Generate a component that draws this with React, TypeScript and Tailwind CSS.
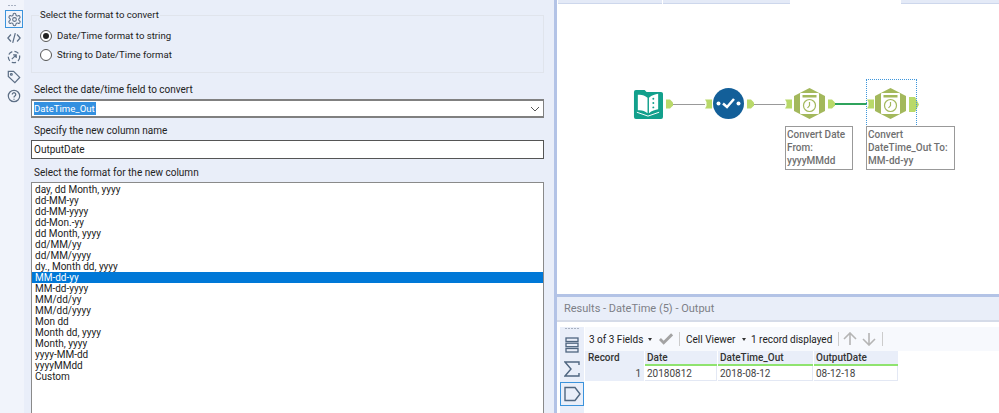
import React from 'react';

const formats = [
  'day, dd Month, yyyy', 'dd-MM-yy', 'dd-MM-yyyy', 'dd-Mon.-yy', 'dd Month, yyyy', 'dd/MM/yy', 'dd/MM/yyyy',
  'dy., Month dd, yyyy', 'MM-dd-yy', 'MM-dd-yyyy', 'MM/dd/yy', 'MM/dd/yyyy', 'Mon dd', 'Month dd, yyyy',
  'Month, yyyy', 'yyyy-MM-dd', 'yyyyMMdd', 'Custom',
];

function Gear() {
  return (
    <svg width="15" height="15" viewBox="0 0 24 24" fill="none" stroke="#5d6f86" strokeWidth="1.7">
      <path d="M12.2 2h-.4a2 2 0 0 0-2 2v.2a2 2 0 0 1-1 1.7l-.4.3a2 2 0 0 1-2 0l-.2-.1a2 2 0 0 0-2.7.7l-.2.4a2 2 0 0 0 .7 2.7l.2.1a2 2 0 0 1 1 1.7v.5a2 2 0 0 1-1 1.8l-.2.1a2 2 0 0 0-.7 2.7l.2.4a2 2 0 0 0 2.7.7l.2-.1a2 2 0 0 1 2 0l.4.3a2 2 0 0 1 1 1.7v.2a2 2 0 0 0 2 2h.4a2 2 0 0 0 2-2v-.2a2 2 0 0 1 1-1.7l.4-.3a2 2 0 0 1 2 0l.2.1a2 2 0 0 0 2.7-.7l.2-.4a2 2 0 0 0-.7-2.7l-.2-.1a2 2 0 0 1-1-1.8v-.5a2 2 0 0 1 1-1.7l.2-.1a2 2 0 0 0 .7-2.7l-.2-.4a2 2 0 0 0-2.7-.7l-.2.1a2 2 0 0 1-2 0l-.4-.3a2 2 0 0 1-1-1.7V4a2 2 0 0 0-2-2z" />
      <circle cx="12" cy="12" r="3" />
    </svg>
  );
}

function RailIcon({ children }: { children: React.ReactNode }) {
  return <div className="h-[19.5px] flex items-center justify-center">{children}</div>;
}

function Sidebar() {
  return (
    <div className="w-[24px] shrink-0 h-full bg-[#f1f4fb] flex flex-col pt-[5px]">
      <div className="flex justify-center gap-[1px] h-[5px]">
        {[0, 1, 2].map((i) => <span key={i} className="w-[2px] h-[1px] bg-[#a9b2c2]" />)}
      </div>
      <div className="ml-[5px] w-[18px] h-[18px] border border-[#3b93dc] flex items-center justify-center"><Gear /></div>
      <div className="pl-[6px] w-[22px]">
        <RailIcon>
          <svg width="14" height="14" viewBox="0 0 16 16" fill="none" stroke="#5d6f86" strokeWidth="1.4">
            <path d="M4.500 4 1 8l3.500 4M11.500 4 15 8l-3.500 4M9.500 2.500l-3 11" />
          </svg>
        </RailIcon>
        <RailIcon>
          <svg width="14" height="14" viewBox="0 0 16 16" fill="none" stroke="#5d6f86" strokeWidth="1.4">
            <circle cx="8" cy="8" r="6.500" strokeDasharray="5 2.600" />
            <path d="M5.500 10.500 10.500 5.500M7 5.500h3.500V9" />
          </svg>
        </RailIcon>
        <RailIcon>
          <svg width="14" height="14" viewBox="0 0 16 16" fill="none" stroke="#5d6f86" strokeWidth="1.4">
            <path d="M1.500 1.500h6l7 7-5.500 6-7.500-7z" />
            <circle cx="5" cy="5" r="1" />
          </svg>
        </RailIcon>
        <RailIcon>
          <svg width="14" height="14" viewBox="0 0 16 16" fill="none" stroke="#5d6f86" strokeWidth="1.4">
            <circle cx="8" cy="8" r="6.500" />
            <path d="M6 6.200a2 2 0 1 1 3 1.800c-.7.400-1 .8-1 1.600M8 11v1.200" />
          </svg>
        </RailIcon>
      </div>
    </div>
  );
}

function Radio({ checked, label }: { checked?: boolean; label: string }) {
  return (
    <div className="flex items-center gap-[5px] h-[19.5px]">
      <span className="w-[12px] h-[12px] rounded-full border border-[#555] bg-white flex items-center justify-center">
        {checked && <span className="w-[6px] h-[6px] rounded-full bg-[#222]" />}
      </span>
      <span>{label}</span>
    </div>
  );
}

function ConfigPanel() {
  return (
    <div className="w-[530px] shrink-0 h-full bg-[#e9eef9] pl-[7px] text-[10px] leading-[14px] text-[#222]">
      <div className="w-[513px] h-[58px] mt-[15px] border border-[#e0e4ec] pl-[8px] relative text-[9.6px]">
        <span className="absolute left-[7px] -top-[8px] bg-[#e9eef9] px-[1px]">Select the format to convert</span>
        <div className="pt-[10px]">
          <Radio checked label="Date/Time format to string" />
          <Radio label="String to Date/Time format" />
        </div>
      </div>
      <div className="pl-[3px] mt-[10px] h-[16px]">Select the date/time field to convert</div>
      <div className="w-[513px] h-[19px] border border-y-2 border-[#808080] bg-white flex items-center justify-between pl-[2px] pr-[3px]">
        <span className="bg-[#3390e0] text-white pr-[1px] leading-[13px] text-[9.6px]">DateTime_Out</span>
        <svg width="10" height="6" viewBox="0 0 10 6" fill="none" stroke="#555" strokeWidth="1"><path d="M1 1l4 4 4-4" /></svg>
      </div>
      <div className="pl-[3px] mt-[6px] h-[16px]">Specify the new column name</div>
      <div className="w-[513px] h-[19px] border border-[#555] bg-white flex items-center pl-[2px]">OutputDate</div>
      <div className="pl-[3px] mt-[7px] h-[16px]">Select the format for the new column</div>
      <div className="w-[513px] h-[240px] border border-[#8a8a8a] bg-white pt-[1px]">
        {formats.map((f) => (
          <div key={f} className={`h-[11px] leading-[11px] pl-[3px] ${f === 'MM-dd-yy' ? 'bg-[#0078d7] text-white' : ''}`}>{f}</div>
        ))}
      </div>
    </div>
  );
}

function Anchor({ left, kind }: { left: number; kind: 'in' | 'out' }) {
  return (
    <svg className="absolute top-[99px]" style={{ left }} width="7" height="10" viewBox="0 0 7 10">
      {kind === 'out'
        ? <path d="M0 0.500h4L7 3.500v3L4 9.500H0z" fill="#b9d96a" />
        : <path d="M0 0.500h7v9H0l1.500-2.500v-4z" fill="#b9d96a" />}
    </svg>
  );
}

function DateNode({ left }: { left: number }) {
  return (
    <svg className="absolute top-[88px]" style={{ left }} width="31" height="31" viewBox="0 0 31 31">
      <path d="M15.500 0 31 8v15l-15.500 8L0 23V8z" fill="#a3b85c" />
      <rect x="6" y="5" width="19" height="21" rx="1" fill="#fff" />
      <rect x="8.500" y="7" width="14" height="2.500" fill="#a3b85c" />
      <circle cx="15.500" cy="17.500" r="6" fill="#fff" stroke="#a3b85c" strokeWidth="1.200" />
      <path d="M15.500 14v3.500l-2 2.500" fill="none" stroke="#a3b85c" strokeWidth="1.200" />
    </svg>
  );
}

function Annotation({ left, width, lines }: { left: number; width: number; lines: string[] }) {
  return (
    <div className="absolute top-[126px] h-[44px] border border-[#999] bg-white pl-[1px] pt-[1px] text-[10px] leading-[13px] font-medium text-[#707070]" style={{ left, width }}>
      {lines.map((l) => <div key={l} className="whitespace-nowrap">{l}</div>)}
    </div>
  );
}

function Canvas() {
  return (
    <div className="relative h-[294px] shrink-0 bg-white overflow-hidden">
      <div className="h-[4px] flex">
        <div className="ml-[1px] w-[104px] bg-[#e4eaf7] border-b border-[#cdd7ec]" />
        <div className="ml-[1px] w-[127px] bg-[#e4eaf7] border-b border-[#cdd7ec]" />
        <div className="flex-1 bg-white" />
        <div className="w-[98px] bg-[#e4eaf7] border-b border-[#cdd7ec]" />
      </div>
      {/* coordinates below are relative to the canvas (page x - 557) */}
      <svg className="absolute left-[76px] top-[89px]" width="30" height="30" viewBox="0 0 31 31">
        <path d="M1 3a2 2 0 0 1 2-2h9l2 2h15a2 2 0 0 1 2 2v24a2 2 0 0 1-2 2H3a2 2 0 0 1-2-2z" fill="#12a08c" />
        <path d="M5 6c4-.5 7 .5 10 3v16c-3-2.500-6-3.500-10-3z" fill="#fff" />
        <path d="M26 5c-3 .5-6.500 1.500-9.500 4v16c3-2.500 6.500-3.500 9.500-4z" fill="#fff" />
        <path d="M4 24l11.500 4 11.500-4" fill="none" stroke="#fff" strokeWidth="1" />
        <circle cx="21" cy="10" r="1" fill="#12a08c" /><circle cx="21" cy="14.500" r="1" fill="#12a08c" /><circle cx="21" cy="19" r="1" fill="#12a08c" />
      </svg>
      <svg className="absolute left-[156px] top-[88px]" width="31" height="31" viewBox="0 0 31 31">
        <circle cx="15.500" cy="15.500" r="15.500" fill="#135f99" />
        <circle cx="5.500" cy="15.500" r="2" fill="#fff" /><circle cx="25.500" cy="15.500" r="2" fill="#fff" />
        <path d="M10 15.500l4 3.500 7-8" fill="none" stroke="#fff" strokeWidth="2.500" />
      </svg>
      <DateNode left={237} />
      <DateNode left={318} />
      <div className="absolute left-[116px] top-[104px] w-[32px] h-[1px] bg-[#999]" />
      <div className="absolute left-[196px] top-[104px] w-[32px] h-[1px] bg-[#999]" />
      <div className="absolute left-[277px] top-[103px] w-[33px] h-[2px] bg-[#2fa35c]" />
      <Anchor left={109} kind="out" />
      <Anchor left={148} kind="in" />
      <Anchor left={190} kind="out" />
      <Anchor left={228} kind="in" />
      <Anchor left={271} kind="out" />
      <Anchor left={310} kind="in" />
      <svg className="absolute left-[352px] top-[97px]" width="10" height="15" viewBox="0 0 10 15">
        <path d="M0 0h6l4 7.500-4 7.500H0z" fill="#b9d96a" />
      </svg>
      <div className="absolute left-[309px] top-[79px] w-[51px] h-[48px] border border-dotted border-[#3d96dc]" />
      <Annotation left={228} width={68} lines={['Convert Date', 'From:', 'yyyyMMdd']} />
      <Annotation left={309} width={89} lines={['Convert', 'DateTime_Out To:', 'MM-dd-yy']} />
    </div>
  );
}

function Caret() {
  return <span className="w-0 h-0 border-x-[2.5px] border-x-transparent border-t-[3px] border-t-[#333]" />;
}

function Sep() {
  return <span className="block w-[1px] h-[14px] bg-[#ccc]" />;
}

function Results() {
  const cols = ['Date', 'DateTime_Out', 'OutputDate'];
  const vals = ['20180812', '2018-08-12', '08-12-18'];
  return (
    <div className="flex-1 flex flex-col bg-white min-h-0">
      <div className="h-[25px] shrink-0 bg-[#e9eef9] border-b-2 border-[#d5dbe8] pl-[7px] pt-[2px] flex items-center text-[11px] text-[#7d8087]">
        Results - DateTime (5) - Output
      </div>
      <div className="flex-1 flex min-h-0">
        <div className="w-[24px] ml-[3px] mt-[5px] bg-[#e9eef9] flex flex-col">
          <div className="flex justify-center gap-[1px] h-[6px] pt-[1px]">
            {[0, 1, 2, 3, 4].map((i) => <span key={i} className="w-[2px] h-[1px] bg-[#a9b2c2]" />)}
          </div>
          <div className="h-[24px] flex items-center justify-center">
            <svg width="14" height="16" viewBox="0 0 14 16" fill="none" stroke="#4f6680" strokeWidth="1.300">
              <rect x="1" y="1" width="12" height="3.500" /><rect x="1" y="6.200" width="12" height="3.500" /><rect x="1" y="11.500" width="12" height="3.500" />
            </svg>
          </div>
          <div className="h-[24px] flex items-center justify-center">
            <svg width="16" height="16" viewBox="0 0 16 16" fill="none" stroke="#4f6680" strokeWidth="1.400">
              <path d="M15 4V1H1l6 7-6 7h14v-3" />
            </svg>
          </div>
          <div className="mt-[1px] h-[24px] border border-[#3b93dc] flex items-center justify-center">
            <svg width="17" height="16" viewBox="0 0 17 16" fill="none" stroke="#4f6680" strokeWidth="1.400">
              <path d="M1 1.500h10l5 6.500-5 6.500H1z" />
            </svg>
          </div>
        </div>
        <div className="flex-1 min-w-0 pl-[1px]">
          <div className="h-[24px] mt-[5px] bg-[#f7f9fd] flex items-center pl-[4px] text-[10px] text-[#222]">
            <span className="w-[59px]">3 of 3 Fields</span>
            <Caret />
            <svg className="ml-[7px]" width="14" height="12" viewBox="0 0 15 12" fill="none" stroke="#a3a3a3" strokeWidth="3"><path d="M1 6l4 4 9-9" /></svg>
            <span className="ml-[6px]"><Sep /></span>
            <span className="ml-[6px] w-[56px]">Cell Viewer</span>
            <Caret />
            <span className="ml-[5px] w-[87px]">1 record displayed</span>
            <Sep />
            <svg className="ml-[4px]" width="14" height="14" viewBox="0 0 14 14" fill="none" stroke="#b5b5b5" strokeWidth="1.600"><path d="M7 13V1.500M1 7l6-6 6 6" /></svg>
            <svg className="ml-[5px]" width="14" height="14" viewBox="0 0 14 14" fill="none" stroke="#b5b5b5" strokeWidth="1.600"><path d="M7 1v11.500M1 7l6 6 6-6" /></svg>
            <span className="ml-[6px]"><Sep /></span>
          </div>
          <div className="grid grid-cols-[59px_73px_96px_85px] text-[10px] leading-[14px] w-[313px]">
            <div className="h-[15px] bg-[#e9eef9] pl-[3px] font-medium text-[#333]">Record</div>
            {cols.map((c) => (
              <div key={c} className="h-[15px] ml-[1px] bg-[#e9eef9] border-b-2 border-[#8fe36f] pl-[2px] font-medium text-[#333]">{c}</div>
            ))}
            <div className="h-[15px] bg-[#e9eef9] pr-[3px] pt-[1px] text-right text-[#444]">1</div>
            {vals.map((v) => (
              <div key={v} className="h-[15px] ml-[1px] bg-white border-b border-r border-[#e3e8f4] pl-[2px] pt-[1px] text-[#444]">{v}</div>
            ))}
          </div>
        </div>
      </div>
    </div>
  );
}

export default function App() {
  return (
    <div className="w-[999px] h-[413px] flex overflow-hidden font-['Roboto',sans-serif]">
      <Sidebar />
      <ConfigPanel />
      <div className="w-[3px] shrink-0 bg-[#b3c3e6]" />
      <div className="flex-1 min-w-0 h-full flex flex-col">
        <Canvas />
        <div className="h-[3px] shrink-0 bg-[#b3c3e6]" />
        <Results />
      </div>
    </div>
  );
}
